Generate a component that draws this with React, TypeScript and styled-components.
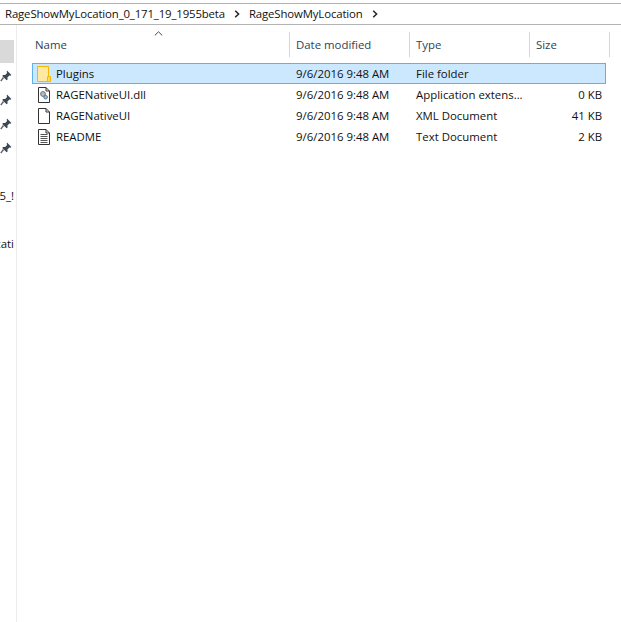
import React from "react";
import styled, { createGlobalStyle } from "styled-components";

const Global = createGlobalStyle`
  html, body { margin: 0; padding: 0; background: #fff; }
  body { font-family: "Open Sans", "Noto Sans", "Liberation Sans", sans-serif; font-size: 11.4px; color: #111; }
`;

const Page = styled.div`
  width: 621px;
  height: 622px;
  overflow: hidden;
  display: flex;
  flex-direction: column;
  background: #fff;
`;

const AddressBar = styled.div`
  height: 20px;
  margin-top: 3px;
  border-top: 1px solid #b4b4b4;
  border-bottom: 1px solid #b4b4b4;
  display: flex;
  align-items: center;
  padding-left: 5px;
  gap: 9px;
  white-space: nowrap;
`;

const Crumb = styled.span`
  line-height: 20px;
  color: #111;
  letter-spacing: -0.14px;
`;

const Body = styled.div`
  flex: 1;
  display: flex;
  min-height: 0;
`;

const Sidebar = styled.div`
  width: 16px;
  flex: none;
  border-right: 1px solid #ececec;
  display: flex;
  flex-direction: column;
  align-items: stretch;
  padding-top: 15px;
`;

const NavSelected = styled.div`
  height: 23px;
  width: 14px;
  margin-bottom: 1px;
  background: #d9d9d9;
`;

const PinRow = styled.div`
  height: 24px;
  display: flex;
  align-items: center;
  justify-content: flex-end;
  padding-right: 4px;
  width: 12px;
`;

const ClippedRow = styled.div<{ $top: number }>`
  margin-top: ${(p) => p.$top}px;
  height: 16px;
  width: 14px;
  overflow: hidden;
  display: flex;
  justify-content: flex-end;
  line-height: 16px;
  white-space: nowrap;
`;

const Main = styled.div`
  flex: 1;
  min-width: 0;
  position: relative;
  padding-left: 15px;
`;

const SortCaret = styled.svg`
  position: absolute;
  left: 137px;
  top: 6px;
`;

const Header = styled.div`
  height: 25px;
  margin-top: 7px;
  display: grid;
  grid-template-columns: 257px 120px 120px 81px;
  width: 578px;
  margin-bottom: 6px;
`;

const HeadCell = styled.div<{ $sep?: boolean }>`
  display: flex;
  align-items: center;
  padding-left: ${(p) => (p.$sep ? 6 : 3)}px;
  border-left: ${(p) => (p.$sep ? "1px solid #d5d5d5" : "none")};
  color: #2f4256;
  padding-bottom: 1px;
  &:last-child { border-right: 1px solid #d5d5d5; }
`;

const Rows = styled.div`
  width: 574px;
  display: flex;
  flex-direction: column;
`;

const Row = styled.div<{ $selected?: boolean }>`
  height: 21px;
  box-sizing: border-box;
  display: grid;
  grid-template-columns: 257px 120px 120px 77px;
  align-items: center;
  background: ${(p) => (p.$selected ? "#cce8ff" : "transparent")};
  outline: ${(p) => (p.$selected ? "1px solid #5fb0ee" : "none")};
  outline-offset: -1px;
`;

const NameCell = styled.div`
  display: flex;
  align-items: center;
  gap: 5px;
  padding-left: 5px;
`;

const Cell = styled.div`
  padding-left: 7px;
  white-space: nowrap;
  overflow: hidden;
`;

const SizeCell = styled.div`
  text-align: right;
  padding-right: 4px;
`;

const Icon = styled.svg`
  width: 14px;
  height: 16px;
  flex: none;
`;

const Pin = () => (
  <svg width="12" height="12" viewBox="0 0 12 12">
    <path d="M7 .6l4.4 4.4-1 .8-1-.4-2 2 .2 2-1 .9-4.4-4.4.9-1 2 .2 2-2-.4-1z" fill="#3e4852" />
    <path d="M3.5 7.5L.8 11.2" stroke="#5a6570" strokeWidth="1.4" />
  </svg>
);

const FolderIcon = () => (
  <Icon viewBox="0 0 14 16">
    <path d="M.5 .5h11v15H.5z" fill="#fde9a4" stroke="#f5b800" />
    <path d="M10.5 15.5V10.5h3v5z" fill="#ffd860" stroke="#f5b800" />
  </Icon>
);

const PageOutline = () => <path d="M1.5 .5h7.5l3.5 3.5v11.5h-11z M9 .5v3.5h3.5" fill="#fff" stroke="#333" />;

const DllIcon = () => (
  <Icon viewBox="0 0 14 16">
    <PageOutline />
    <circle cx="6" cy="7" r="2.4" fill="#b8bcc4" stroke="#6a7078" />
    <circle cx="8.6" cy="10.2" r="1.8" fill="#8fc0e8" stroke="#5a7590" />
  </Icon>
);

const DocIcon = () => (
  <Icon viewBox="0 0 14 16">
    <PageOutline />
  </Icon>
);

const TextIcon = () => (
  <Icon viewBox="0 0 14 16">
    <PageOutline />
    <path d="M3.5 5.5h7M3.5 7.5h7M3.5 9.5h7M3.5 11.5h7M3.5 13.5h7" stroke="#555" />
  </Icon>
);

const Chevron = () => (
  <svg width="6" height="8" viewBox="0 0 6 8">
    <path d="M1.2 .8L4.6 4 1.2 7.2" fill="none" stroke="#222" strokeWidth="1.5" />
  </svg>
);

const files = [
  { name: "Plugins", date: "9/6/2016 9:48 AM", type: "File folder", size: "", icon: <FolderIcon />, selected: true },
  { name: "RAGENativeUI.dll", date: "9/6/2016 9:48 AM", type: "Application extens...", size: "0 KB", icon: <DllIcon /> },
  { name: "RAGENativeUI", date: "9/6/2016 9:48 AM", type: "XML Document", size: "41 KB", icon: <DocIcon /> },
  { name: "README", date: "9/6/2016 9:48 AM", type: "Text Document", size: "2 KB", icon: <TextIcon /> },
];

export default function App() {
  return (
    <Page>
      <Global />
      <AddressBar>
        <Crumb>RageShowMyLocation_0_171_19_1955beta</Crumb>
        <Chevron />
        <Crumb>RageShowMyLocation</Crumb>
        <Chevron />
      </AddressBar>
      <Body>
        <Sidebar>
          <NavSelected />
          <PinRow><Pin /></PinRow>
          <PinRow><Pin /></PinRow>
          <PinRow><Pin /></PinRow>
          <PinRow><Pin /></PinRow>
          <ClippedRow $top={28}>5_!</ClippedRow>
          <ClippedRow $top={32}>cati</ClippedRow>
        </Sidebar>
        <Main>
          <SortCaret width="9" height="5" viewBox="0 0 9 5">
            <path d="M.8 4.4L4.5 .8l3.7 3.6" fill="none" stroke="#444" />
          </SortCaret>
          <Header>
            <HeadCell>Name</HeadCell>
            <HeadCell $sep>Date modified</HeadCell>
            <HeadCell $sep>Type</HeadCell>
            <HeadCell $sep>Size</HeadCell>
          </Header>
          <Rows>
            {files.map((f) => (
              <Row key={f.name} $selected={f.selected}>
                <NameCell>{f.icon}{f.name}</NameCell>
                <Cell>{f.date}</Cell>
                <Cell>{f.type}</Cell>
                <SizeCell>{f.size}</SizeCell>
              </Row>
            ))}
          </Rows>
        </Main>
      </Body>
    </Page>
  );
}
